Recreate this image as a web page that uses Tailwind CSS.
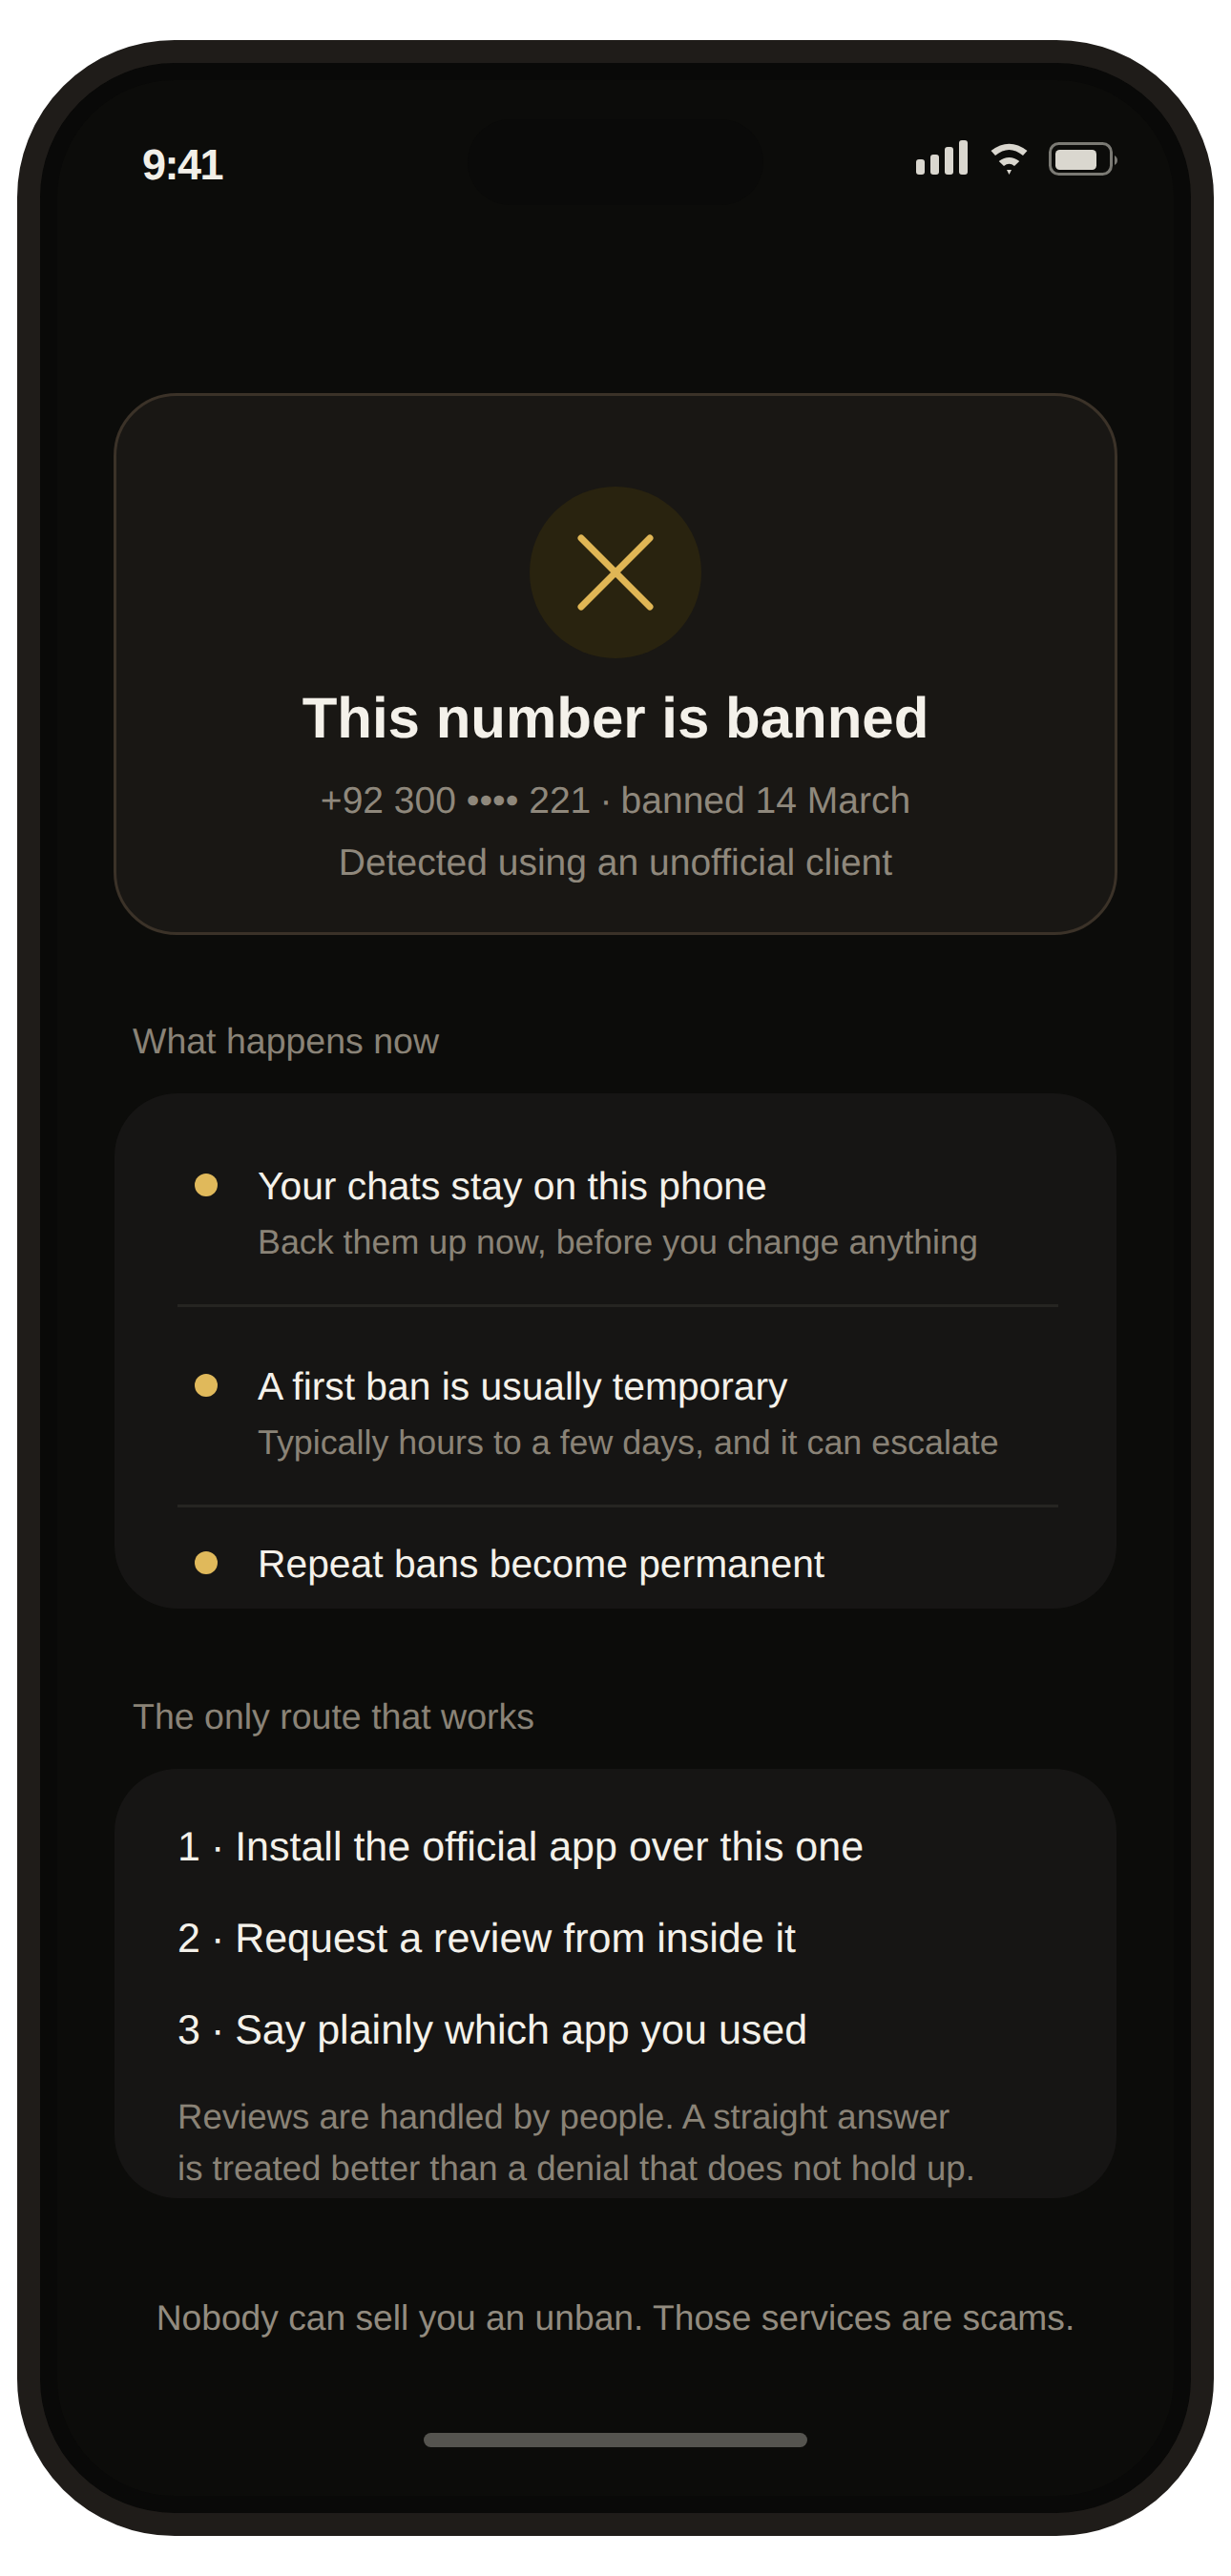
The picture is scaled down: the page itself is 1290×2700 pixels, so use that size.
<!DOCTYPE html>
<html lang="en">
<head>
<meta charset="utf-8">
<title>This number is banned</title>
<script src="https://cdn.jsdelivr.net/npm/@tailwindcss/browser@4"></script>
</head>
<body class="bg-white font-['Liberation_Sans',Arial,sans-serif] [text-rendering:geometricPrecision]">
<div class="pt-[42px] pl-[18px] h-[2700px] w-[1290px] overflow-hidden">
  <div class="relative w-[1254px] h-[2616px] border-[24px] border-[#1f1c19] rounded-[165px] bg-[#0c0c0a] overflow-hidden shadow-[inset_0_0_0_18px_#090908]">
    <div class="absolute left-[448px] top-[59px] w-[310px] h-[90px] rounded-[45px] bg-[#0a0a09]"></div>

    <div class="relative flex justify-between h-[346px] pl-[107px] pr-[68px]">
      <div class="mt-[80px] h-[54px] text-[45px] leading-[54px] font-bold tracking-[-1.5px] text-[#f2efe8]">9:41</div>
      <svg class="mt-[64px]" width="240" height="60" viewBox="0 0 240 60" fill="#dad7cf">
        <rect x="20" y="37" width="9" height="16" rx="3"/>
        <rect x="35" y="32" width="9" height="21" rx="3"/>
        <rect x="50" y="24" width="9" height="29" rx="3"/>
        <rect x="65" y="17" width="9" height="36" rx="3"/>
        <path d="M98.5 28Q117.5 13.4 136.5 28L132 33Q117.5 21 103 33Z"/>
        <path d="M106.7 39Q117.5 31 128.3 39L123 44Q117.5 39.5 112 44Z"/>
        <path d="M115 48H120L117.5 53Z"/>
        <rect x="160.5" y="20.5" width="64" height="32" rx="9" fill="none" stroke="#7b7a74" stroke-width="3"/>
        <rect x="166" y="27" width="43" height="21" rx="4.5"/>
        <path d="M228 33C230 34 231 36 231 38C231 40 230 42 228 43Z" fill="#7b7a74"/>
      </svg>
    </div>

    <div class="relative px-[78px]">
      <section class="-mx-px h-[568px] pt-[95px] border-[3px] border-[#3b3228] rounded-[66px] bg-[#191714] flex flex-col items-center">
        <div class="w-[180px] h-[180px] rounded-full bg-[#29230f] flex items-center justify-center">
          <svg width="80" height="80" viewBox="0 0 80 80" fill="none" stroke="#e0b655" stroke-width="7" stroke-linecap="round">
            <path d="M4 4L76 76M76 4L4 76"/>
          </svg>
        </div>
        <h1 class="mt-[27px] text-[60px] leading-[72px] font-bold text-[#f4f1ea]">This number is banned</h1>
        <p class="mt-[18px] text-[39px] leading-[65px] text-[#8f887c]">+92 300 •••• 221 <span class="-mx-[1.7px]">·</span> banned 14 March</p>
        <p class="text-[39px] leading-[65px] text-[#8f887c]">Detected using an unofficial client</p>
      </section>

      <h2 class="mt-[87px] pl-[19px] text-[37.5px] leading-[48px] font-normal text-[#8a8377]">What happens now</h2>
      <section class="mt-[31px] h-[540px] rounded-[66px] bg-[#161514] overflow-hidden pl-[66px] pr-[61px]">
        <div class="flex pt-[72px] pb-[42px] border-b-[3px] border-[#262522]">
          <span class="mt-[12px] ml-[18px] mr-[42px] w-[24px] h-[24px] rounded-full bg-[#e0b95b] shrink-0"></span>
          <div>
            <p class="text-[40.8px] leading-[51px] text-[#f4f1ea]">Your chats stay on this phone</p>
            <p class="mt-[10px] text-[35.85px] leading-[46px] text-[#8a8377]">Back them up now, before you change anything</p>
          </div>
        </div>
        <div class="flex pt-[58px] pb-[42px] border-b-[3px] border-[#262522]">
          <span class="mt-[12px] ml-[18px] mr-[42px] w-[24px] h-[24px] rounded-full bg-[#e0b95b] shrink-0"></span>
          <div>
            <p class="text-[40.8px] leading-[51px] text-[#f4f1ea]">A first ban is usually temporary</p>
            <p class="mt-[10px] text-[35.85px] leading-[46px] text-[#8a8377]">Typically hours to a few days, and it can escalate</p>
          </div>
        </div>
        <div class="flex pt-[34px]">
          <span class="mt-[12px] ml-[18px] mr-[42px] w-[24px] h-[24px] rounded-full bg-[#e0b95b] shrink-0"></span>
          <p class="text-[40.8px] leading-[51px] text-[#f4f1ea]">Repeat bans become permanent</p>
        </div>
      </section>

      <h2 class="mt-[89px] pl-[19px] text-[37.5px] leading-[48px] font-normal text-[#8a8377]">The only route that works</h2>
      <section class="mt-[31px] h-[450px] rounded-[66px] bg-[#161514] overflow-hidden px-[66px] pt-[57px]">
        <div class="flex flex-col gap-[45px] text-[43px] leading-[51px] text-[#f4f1ea]">
          <p>1 <span class="-mx-[1px]">·</span> Install the official app over this one</p>
          <p>2 <span class="-mx-[1px]">·</span> Request a review from inside it</p>
          <p>3 <span class="-mx-[1px]">·</span> Say plainly which app you used</p>
        </div>
        <p class="mt-[38px] text-[36.6px] leading-[54px] text-[#8a8377]">Reviews are handled by people. A straight answer<br>is treated better than a denial that does not hold up.</p>
      </section>

      <p class="mt-[98px] text-center text-[37.2px] leading-[54px] text-[#928b7f]">Nobody can sell you an unban. Those services are scams.</p>
      <div class="mt-[94px] mx-auto w-[402px] h-[15px] rounded-[8px] bg-[#55544f]"></div>
    </div>
  </div>
</div>
</body>
</html>
